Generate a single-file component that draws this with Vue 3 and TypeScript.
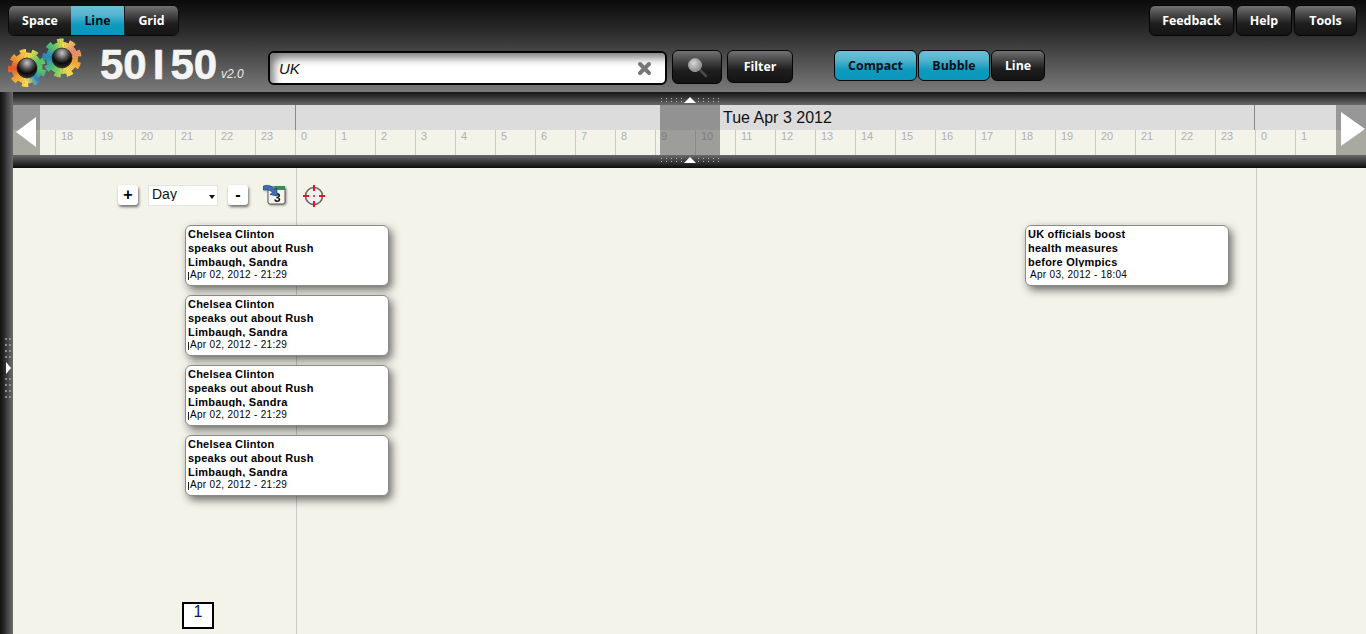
<script setup lang="ts">
interface Stop { a: number; c: number[] }
const mix = (stops: Stop[], a: number): string => {
  for (let i = 0; i < stops.length - 1; i++) {
    const s = stops[i], e = stops[i + 1]
    if (a >= s.a && a <= e.a) {
      const t = (a - s.a) / (e.a - s.a)
      return `rgb(${s.c.map((v, k) => Math.round(v + (e.c[k] - v) * t)).join(',')})`
    }
  }
  return 'rgb(0,0,0)'
}
const gear = (cx: number, cy: number, rOut: number, rIn: number, teeth: number, phase: number, stops: Stop[]) => {
  const N = teeth * 6
  const out: { d: string; fill: string }[] = []
  for (let i = 0; i < N; i++) {
    const a0 = (i / N) * 360 + phase
    const a1 = ((i + 1.15) / N) * 360 + phase
    const r = i % 6 < 3 ? rOut : rIn
    const p0 = [cx + r * Math.cos((a0 * Math.PI) / 180), cy + r * Math.sin((a0 * Math.PI) / 180)]
    const p1 = [cx + r * Math.cos((a1 * Math.PI) / 180), cy + r * Math.sin((a1 * Math.PI) / 180)]
    out.push({
      d: `M${cx} ${cy}L${p0[0].toFixed(2)} ${p0[1].toFixed(2)}L${p1[0].toFixed(2)} ${p1[1].toFixed(2)}Z`,
      fill: mix(stops, (i / N) * 360),
    })
  }
  return out
}
const red = [232, 84, 40], orange = [250, 165, 50], yellow = [250, 222, 80], green = [90, 200, 105], blue = [40, 135, 205], pink = [232, 140, 120]
const gearA = gear(19, 30, 19, 15.5, 9, 6, [
  { a: 0, c: green }, { a: 40, c: blue }, { a: 80, c: yellow }, { a: 130, c: orange },
  { a: 170, c: red }, { a: 215, c: orange }, { a: 270, c: yellow }, { a: 320, c: green }, { a: 360, c: green },
])
const gearB = gear(54, 20, 19.5, 16, 9, 14, [
  { a: 0, c: orange }, { a: 50, c: yellow }, { a: 110, c: green }, { a: 170, c: blue },
  { a: 215, c: green }, { a: 260, c: yellow }, { a: 310, c: pink }, { a: 360, c: orange },
])

const hours: number[] = []
for (let h = 17; h < 24; h++) hours.push(h)
for (let h = 0; h < 24; h++) hours.push(h)
hours.push(0, 1)

const dotsN = Array.from({ length: 10 }, (_, i) => i)
const sideDots = Array.from({ length: 8 }, (_, i) => i)

const clinton = { lines: ['Chelsea Clinton', 'speaks out about Rush', 'Limbaugh, Sandra'], date: 'Apr 02, 2012 - 21:29', mark: true }
const stacks = [
  { left: 172, cards: [clinton, clinton, clinton, clinton] },
  { left: 1012, cards: [{ lines: ['UK officials boost', 'health measures', 'before Olympics'], date: 'Apr 03, 2012 - 18:04', mark: false }] },
]
</script>

<template>
  <div class="page">
    <header class="head">
      <div class="row-top">
        <div class="group">
          <button class="btn seg space">Space</button>
          <button class="btn seg on line-seg">Line</button>
          <button class="btn seg grid-seg">Grid</button>
        </div>
        <div class="right-btns">
          <button class="btn w85">Feedback</button>
          <button class="btn w56">Help</button>
          <button class="btn w63">Tools</button>
        </div>
      </div>
      <div class="row-bottom">
        <svg class="gears" width="76" height="50" viewBox="0 0 76 50">
          <path v-for="(s, i) in gearA" :key="'a' + i" :d="s.d" :fill="s.fill" />
          <path v-for="(s, i) in gearB" :key="'b' + i" :d="s.d" :fill="s.fill" />
          <defs>
            <radialGradient id="ball" cx="50%" cy="25%" r="75%">
              <stop offset="0" stop-color="#c8c8c8" />
              <stop offset=".45" stop-color="#444" />
              <stop offset=".7" stop-color="#0a0a0a" />
              <stop offset="1" stop-color="#333" />
            </radialGradient>
          </defs>
          <circle cx="19" cy="30" r="10" fill="url(#ball)" stroke="#111" stroke-width=".6" />
          <circle cx="54" cy="20" r="10" fill="url(#ball)" stroke="#111" stroke-width=".6" />
        </svg>
        <div class="brand">50<span class="bar">I</span>50</div>
        <div class="ver">v2.0</div>
        <div class="search">
          <span class="query">UK</span>
          <svg class="clear" width="15" height="15" viewBox="0 0 15 15">
            <path d="M3 3 12 12M12 3 3 12" stroke="#777" stroke-width="4" stroke-linecap="round" />
          </svg>
        </div>
        <button class="btn search-btn">
          <svg width="22" height="22" viewBox="0 0 22 22">
            <defs>
              <radialGradient id="lens" cx="40%" cy="35%" r="70%">
                <stop offset="0" stop-color="#d8d8d8" />
                <stop offset="1" stop-color="#858585" />
              </radialGradient>
            </defs>
            <path d="M13 13 20 20" stroke="#4a4a4a" stroke-width="2.5" stroke-linecap="round" />
            <circle cx="9" cy="9" r="6.5" fill="url(#lens)" stroke="#999" />
          </svg>
        </button>
        <button class="btn filter">Filter</button>
        <button class="btn on compact">Compact</button>
        <button class="btn on bubble">Bubble</button>
        <button class="btn line-btn">Line</button>
      </div>
    </header>

    <div class="body">
      <aside class="side">
        <div class="side-grip">
          <div class="sdots"><i v-for="d in sideDots" :key="'l' + d"></i></div>
          <span class="side-arrow"></span>
          <div class="sdots"><i v-for="d in sideDots" :key="'m' + d"></i></div>
        </div>
      </aside>

      <div class="content">
        <section class="timeline">
          <div class="band band-top"></div>
          <div class="dates">
            <div class="day first"></div>
            <div class="day mid">Tue Apr 3 2012</div>
            <div class="day"></div>
          </div>
          <div class="ticks">
            <div v-for="(h, i) in hours" :key="i" class="tick">{{ h }}</div>
          </div>
          <div class="band band-bottom"></div>

          <div class="arrow-box left"><span class="tri tri-left"></span></div>
          <div class="arrow-box right"><span class="tri tri-right"></span></div>

          <div class="window">
            <div class="grip grip-top">
              <div class="dots"><i v-for="d in dotsN" :key="'a' + d"></i></div>
              <span class="up"></span>
              <div class="dots"><i v-for="d in dotsN" :key="'b' + d"></i></div>
            </div>
            <div class="grip grip-bottom">
              <div class="dots"><i v-for="d in dotsN" :key="'c' + d"></i></div>
              <span class="up"></span>
              <div class="dots"><i v-for="d in dotsN" :key="'d' + d"></i></div>
            </div>
          </div>
        </section>

        <main class="canvas">
          <i class="vline v1"></i>
          <i class="vline v2"></i>

          <div class="controls">
            <button class="mini">+</button>
            <div class="select-wrap">
              <select class="range">
                <option>Day</option>
              </select>
              <span class="caret"></span>
            </div>
            <button class="mini">-</button>
            <svg class="cal" width="24" height="22" viewBox="0 0 24 22">
              <rect x="5" y="3" width="17" height="17" rx="2" fill="#f4f4ee" stroke="#555" />
              <rect x="11" y="2" width="11" height="4" fill="#3d8a57" />
              <text x="11" y="18" class="cal-num">3</text>
              <path d="M0.5 2 C5 0.5 9 2 11.5 5.5 L13.5 4 L14.5 12 L7 10.5 L9.5 8.5 C7 6 4 5 0.5 6Z" fill="#3f6fb5" stroke="#1f3a70" stroke-width=".7" />
            </svg>
            <svg class="target" width="22" height="22" viewBox="0 0 22 22">
              <circle cx="11" cy="11" r="8.5" fill="#efefef" stroke="#666" stroke-width="1.6" />
              <path d="M11 0V6M11 16V22M0 11H6M16 11H22" stroke="#e8141c" stroke-width="2" />
              <circle cx="11" cy="11" r="1" fill="#e8141c" />
            </svg>
          </div>

          <div v-for="(st, si) in stacks" :key="si" class="stack" :style="{ left: st.left + 'px' }">
            <article v-for="(c, ci) in st.cards" :key="ci" class="card">
              <div class="title">
                <div v-for="l in c.lines" :key="l">{{ l }}</div>
              </div>
              <div class="date"><i v-if="c.mark" class="mark"></i>{{ c.date }}</div>
            </article>
          </div>

          <div class="pager">1</div>
        </main>
      </div>
    </div>
  </div>
</template>

<style>
html, body { margin: 0; overflow: hidden; background: #f3f3ea; }
</style>

<style scoped>
.page {
  width: 1366px;
  height: 634px;
  display: flex;
  flex-direction: column;
  overflow: hidden;
  font-family: "Liberation Sans", Arial, sans-serif;
}
.head {
  height: 92px;
  flex: none;
  box-sizing: border-box;
  padding: 5px 9px 0 8px;
  background: linear-gradient(#0a0a0a 0%, #2c2c2c 35%, #565656 70%, #7a7a7a 100%);
}
.row-top { display: flex; justify-content: space-between; height: 31px; }
.group { display: flex; border-radius: 6px; overflow: hidden; border: 1px solid #0a0a0a; box-sizing: border-box; height: 31px; }
.right-btns { display: flex; gap: 2px; }
.btn {
  box-sizing: border-box;
  height: 31px;
  padding: 2px 0 0;
  border: 1px solid #050505;
  border-radius: 6px;
  background: linear-gradient(#727272 0%, #4a4a4a 28%, #1d1d1d 62%, #141414 100%);
  color: #fff;
  font-family: "Open Sans", sans-serif;
  font-weight: 700;
  font-size: 12.4px;
  line-height: 1;
  flex: none;
  display: flex;
  align-items: center;
  justify-content: center;
}
.btn.on {
  background: linear-gradient(#6cc0d8 0%, #55b4cf 30%, #0f9abf 65%, #0897bb 100%);
  color: #071018;
}
.seg { border: 0; border-radius: 0; height: 29px; }
.space { width: 62px; }
.line-seg { width: 53px; margin: 0 1px 0 0; }
.grid-seg { width: 53px; }
.w85 { width: 85px; }
.w56 { width: 56px; }
.w63 { width: 63px; }

.row-bottom { display: flex; align-items: flex-start; height: 56px; }
.gears { flex: none; margin-top: 2px; width: 76px; }
.brand {
  flex: none;
  width: 118px;
  margin-left: 16px;
  margin-top: 1px;
  color: #f4f4f4;
  font-family: "Liberation Sans", sans-serif;
  font-weight: 700;
  font-size: 42px;
  -webkit-text-stroke: 0.6px #f4f4f4;
  line-height: 56px;
  white-space: nowrap;
}
.bar { margin: 0 6px 0 6px; }
.ver {
  flex: none;
  width: 46px;
  margin: 31px 0 0 3px;
  font-size: 12px;
  font-style: italic;
  color: #ececec;
}
.search {
  flex: none;
  box-sizing: border-box;
  width: 399px;
  height: 34px;
  margin: 15px 0 0 1px;
  border: 2px solid #050505;
  border-radius: 6px;
  background: #fff;
  box-shadow: inset 8px 9px 9px -4px #7c7c7c;
  display: flex;
  align-items: center;
  justify-content: space-between;
  padding: 0 13px 0 9px;
}
.query { font-size: 15px; font-style: italic; color: #111; }
.clear { flex: none; }
.search-btn { width: 50px; height: 34px; margin: 14px 0 0 5px; padding: 0; }
.filter { width: 66px; height: 33px; margin: 14px 0 0 5px; }
.compact { width: 83px; margin: 14px 0 0 41px; }
.bubble { width: 72px; margin: 14px 0 0 1px; }
.line-btn { width: 54px; margin: 14px 0 0 1px; }

.body { flex: 1; display: flex; min-height: 0; }
.side {
  width: 13px;
  flex: none;
  background: linear-gradient(90deg, #111 0%, #222 25%, #3c3c3c 50%, #6c6c6c 100%);
  position: relative;
}
.side-grip {
  position: absolute;
  top: 246px;
  left: 5px;
  display: flex;
  flex-direction: column;
  align-items: flex-start;
  gap: 4px;
}
.sdots { display: grid; grid-template-columns: 2px 2px; column-gap: 2px; row-gap: 4px; }
.sdots i { width: 2px; height: 2px; background: #8c8c8c; }
.side-arrow {
  width: 0;
  height: 0;
  margin-left: 1px;
  border-left: 5px solid #fff;
  border-top: 6px solid transparent;
  border-bottom: 6px solid transparent;
}
.content { flex: 1; min-width: 0; display: flex; flex-direction: column; }

.timeline { position: relative; height: 76px; flex: none; }
.band { height: 13px; }
.band-top { background: linear-gradient(#161616 0%, #333 40%, #6a6a6a 100%); }
.band-bottom { background: linear-gradient(#6a6a6a 0%, #3a3a3a 50%, #0c0c0c 100%); }
.dates { height: 25px; display: flex; background: #dcdcdc; }
.day { box-sizing: border-box; flex: 1; }
.day.first { flex: 0 0 282px; }
.day.mid {
  flex: 0 0 960px;
  border-left: 1px solid #888;
  border-right: 1px solid #888;
  padding-left: 427px;
  font-size: 16px;
  line-height: 25px;
  color: #111;
}
.ticks { height: 25px; display: flex; padding-left: 2px; background: #f3f3ea; overflow: hidden; }
.tick {
  flex: 0 0 40px;
  box-sizing: border-box;
  border-left: 1px solid #cbcbc6;
  padding: 0 0 0 5px;
  font-size: 11px;
  line-height: 13px;
  color: #b0b0b0;
}
.arrow-box {
  position: absolute;
  top: 13px;
  height: 50px;
  background: linear-gradient(#979797 50%, #a9a9a1 50%);
}
.arrow-box.left { left: 0; width: 27px; }
.arrow-box.right { left: 1323px; width: 30px; }
.tri { position: absolute; width: 0; height: 0; }
.tri-left {
  left: 3px;
  top: 12px;
  border-right: 20px solid #fff;
  border-top: 15px solid transparent;
  border-bottom: 15px solid transparent;
}
.tri-right {
  left: 5px;
  top: 7px;
  border-left: 24px solid #fff;
  border-top: 17px solid transparent;
  border-bottom: 17px solid transparent;
}
.window {
  position: absolute;
  left: 647px;
  top: 0;
  width: 60px;
  height: 76px;
}
.window::before {
  content: "";
  position: absolute;
  left: 0;
  right: 0;
  top: 13px;
  height: 50px;
  background: rgba(85, 85, 85, 0.55);
}
.grip {
  position: absolute;
  left: 1px;
  right: 1px;
  height: 7px;
  display: flex;
  justify-content: space-between;
  align-items: center;
}
.grip-top { top: 4px; }
.grip-bottom { top: 64px; }
.dots { display: grid; grid-template-columns: repeat(5, 1px); column-gap: 4px; row-gap: 2px; }
.dots i { width: 1px; height: 1px; background: #b4b4b4; }
.up {
  width: 0;
  height: 0;
  border-bottom: 6px solid #fff;
  border-left: 6px solid transparent;
  border-right: 6px solid transparent;
}

.canvas { flex: 1; position: relative; background: #f3f3ea; display: flex; flex-direction: column; min-height: 0; overflow: hidden; }
.vline { position: absolute; top: 0; bottom: 0; width: 1px; background: #cbcbc6; }
.v1 { left: 283px; }
.v2 { left: 1243px; }
.controls {
  position: relative;
  display: flex;
  align-items: flex-start;
  padding: 17px 0 0 105px;
  height: 24px;
}
.mini {
  width: 20px;
  height: 20px;
  box-sizing: border-box;
  border: 0;
  padding: 0;
  border-radius: 3px;
  background: #fff;
  box-shadow: 1px 2px 3px rgba(0, 0, 0, 0.55);
  font-family: "Liberation Sans", sans-serif;
  font-weight: 700;
  font-size: 16px;
  line-height: 18px;
  color: #000;
  flex: none;
}
.select-wrap { position: relative; width: 70px; height: 21px; margin: 0 10px; flex: none; }
.range {
  appearance: none;
  width: 70px;
  height: 21px;
  box-sizing: border-box;
  border: 1px solid #e4e4e4;
  background: #fff;
  padding: 0 0 4px 3px;
  font-family: "Liberation Sans", sans-serif;
  font-size: 14px;
  color: #111;
  border-radius: 0;
  display: block;
}
.caret {
  position: absolute;
  right: 3px;
  top: 10px;
  width: 0;
  height: 0;
  border-top: 4px solid #111;
  border-left: 3.5px solid transparent;
  border-right: 3.5px solid transparent;
}
.cal { flex: none; margin: -1px 0 0 15px; filter: drop-shadow(1px 1px 1px rgba(0, 0, 0, 0.4)); }
.cal-num { font-family: "Liberation Sans", sans-serif; font-weight: 700; font-size: 12px; fill: #111; }
.target { flex: none; margin: 0 0 0 16px; }
.stack { position: absolute; top: 57px; display: flex; flex-direction: column; gap: 9px; }
.card {
  box-sizing: border-box;
  width: 204px;
  height: 61px;
  padding: 1px 2px 0;
  background: #fff;
  border: 1px solid #8a8a8a;
  border-radius: 6px;
  box-shadow: 3px 4px 8px rgba(0, 0, 0, 0.55);
  color: #000;
}
.title {
  height: 40px;
  overflow: hidden;
  font-weight: 700;
  font-size: 11px;
  line-height: 14px;
  letter-spacing: 0.22px;
  width: 165px;
}
.date { position: relative; margin-top: 2px; padding-left: 2px; font-size: 10px; line-height: 12px; letter-spacing: 0.3px; white-space: nowrap; }
.mark { position: absolute; left: 0; top: 3px; width: 1px; height: 8px; background: #222; }
.pager {
  position: relative;
  box-sizing: border-box;
  width: 32px;
  height: 27px;
  margin: auto 0 5px 169px;
  border: 2px solid #000;
  background: #fff;
  text-align: center;
  color: #001a70;
  font-size: 16px;
  line-height: 16px;
}
</style>
